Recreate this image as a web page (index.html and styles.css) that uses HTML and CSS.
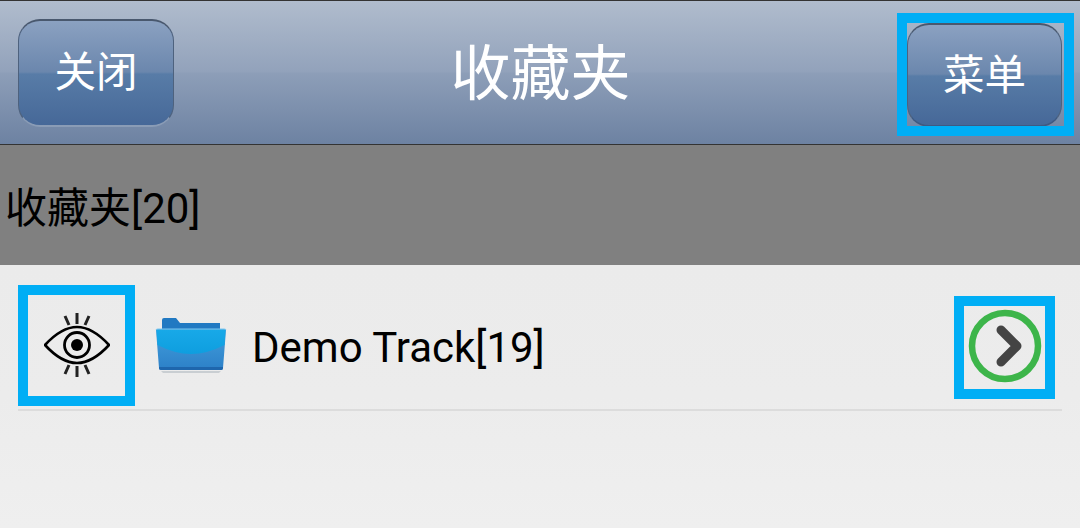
FILE: index.html
```html
<!DOCTYPE html>
<html lang="zh">
<head>
<meta charset="utf-8">
<title>收藏夹</title>
<link rel="stylesheet" href="styles.css">
</head>
<body>
<div class="screen">
  <header class="topbar">
    <button class="btn">关闭</button>
    <h1 class="title">收藏夹</h1>
    <button class="btn btn-menu">菜单</button>
    <span class="mark mark-menu"></span>
  </header>
  <div class="section">收藏夹[20]</div>
  <div class="list">
    <div class="row">
      <svg class="eye" width="66" height="66" viewBox="0 0 66 66" fill="none" stroke="#000">
        <path d="M1 33 C12 21 22 15 33 15 C44 15 54 21 65 33 C54 45 44 51 33 51 C22 51 12 45 1 33Z" stroke-width="2.600"/>
        <circle cx="33" cy="33" r="12.500" stroke-width="2.800"/>
        <circle cx="33" cy="33" r="6" fill="#000" stroke="none"/>
        <path d="M33 1V12M21 4L25 13M45 4L41 13M33 54V65M21 62L25 53M45 62L41 53" stroke-width="3" stroke="#222"/>
      </svg>
      <svg class="folder" width="72" height="56" viewBox="0 0 72 56">
        <defs>
          <linearGradient id="fTop" x1="0" y1="0" x2="0" y2="1"><stop offset="0" stop-color="#18a9e8"/><stop offset="1" stop-color="#0e9edf"/></linearGradient>
          <linearGradient id="fLow" x1="0" y1="0" x2="0" y2="1"><stop offset="0" stop-color="#439fdc"/><stop offset="1" stop-color="#2c80c8"/></linearGradient>
        </defs>
        <path d="M7 12V2Q7 0 9 0H21L25 5H65V14H7Z" fill="#2179c2"/>
        <path d="M1 12Q1 11 3 11H69Q71 11 71 12L68 50Q68 52 66 52H6Q4 52 4 50Z" fill="url(#fLow)"/>
        <path d="M1.500 12Q1.500 11.500 3 11.500H69Q70.500 11.500 70.500 12L69.500 27Q52 36 36 36Q20 36 2.500 27Z" fill="url(#fTop)"/>
        <path d="M1 12Q1 11 3 11H69Q71 11 71 12" fill="none" stroke="#7cc6ee" stroke-width="1"/>
        <path d="M4 50Q4 52 6 52H66Q68 52 68 50V49H4Z" fill="#1e66ad"/>
        <path d="M6 53H66L64 55H8Z" fill="#c9ced2"/>
      </svg>
      <span class="label">Demo Track[19]</span>
      <svg class="go" width="74" height="74" viewBox="0 0 74 74" fill="none">
        <circle cx="37" cy="37" r="33" stroke="#3db54a" stroke-width="6.500"/>
        <path d="M33 21L49 37L33 53" stroke="#444" stroke-width="9" stroke-linecap="round" stroke-linejoin="round"/>
      </svg>
      <span class="mark mark-eye"></span>
      <span class="mark mark-go"></span>
    </div>
  </div>
</div>
</body>
</html>
```
FILE: styles.css
```css
* { box-sizing: border-box; }
html, body { margin: 0; padding: 0; }
body { width: 1080px; height: 528px; overflow: hidden; font-family: "Noto Sans CJK SC", "Roboto", sans-serif; }
.screen { width: 1080px; height: 528px; display: flex; flex-direction: column; background: #ececec; }
.topbar {
  position: relative;
  height: 145px;
  flex: none;
  display: flex;
  align-items: flex-start;
  justify-content: space-between;
  padding: 18px 18px 0;
  background: linear-gradient(#b0bccd 0%, #92a2bb 49.500%, #8d9eb8 50.500%, #6d82a2 100%);
  border-top: 1px solid #333;
  border-bottom: 1px solid #333;
}
.btn {
  width: 156px;
  height: 108px;
  border: 1px solid #4e627e;
  border-top: 2px solid #49586e;
  border-bottom: 2px solid #8a9cb6;
  border-radius: 22px;
  color: #fff;
  font-family: inherit;
  font-size: 41.500px;
  line-height: 1;
  padding: 0 0 6px;
  background: linear-gradient(#8ba1c1 0%, #6b87ad 49%, #587ca7 51%, #466898 100%);
}
.btn-menu { width: 155px; height: 104px; margin-top: 4px; padding-bottom: 4px; border-bottom-color: #3f5a82; }
.title {
  margin: 20px 0 0;
  font-size: 60px;
  font-weight: 400;
  color: #fff;
  line-height: 1;
}
.section {
  height: 120px;
  flex: none;
  display: flex;
  align-items: center;
  padding: 0 0 2px 5px;
  background: #808080;
  color: #000;
  font-family: "Roboto", "Noto Sans CJK SC", sans-serif;
  font-size: 42px;
}
.list { flex: 1; padding: 0 18px; background: linear-gradient(#ebebeb 0%, #ececec 50%, #efefef 100%); }
.row {
  position: relative;
  height: 146px;
  padding-top: 16px;
  display: flex;
  align-items: center;
  border-bottom: 2px solid #dcdcdc;
}
.eye { margin-left: 26px; flex: none; }
.folder { margin-left: 45px; margin-top: 2px; flex: none; }
.label { margin-left: 25px; margin-top: 4px; flex: 1; font-family: "Roboto", sans-serif; font-size: 42px; color: #000; }
.go { margin-right: 20px; margin-top: 1px; flex: none; }
.mark { position: absolute; border: 10px solid #00aef5; pointer-events: none; }
.mark-menu { left: 897px; top: 12px; width: 177px; height: 123px; }
.mark-eye { left: 0; top: 20px; width: 117px; height: 121px; }
.mark-go { left: 936px; top: 31px; width: 101px; height: 103px; }
```
